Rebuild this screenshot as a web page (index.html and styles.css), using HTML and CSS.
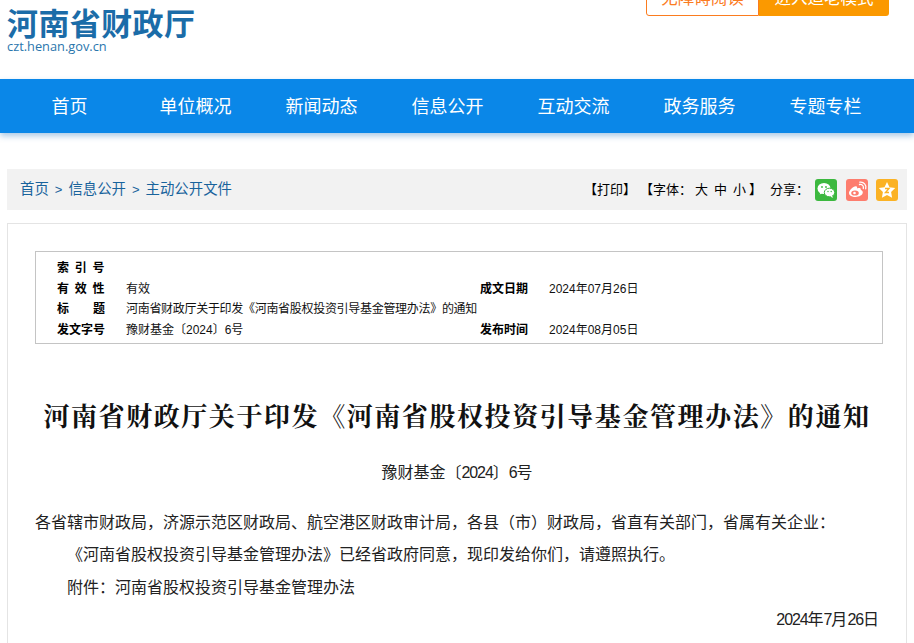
FILE: index.html
```html
<!DOCTYPE html>
<html lang="zh-CN">
<head>
  <meta charset="UTF-8">
  <title>河南省财政厅关于印发《河南省股权投资引导基金管理办法》的通知</title>
  <link rel="stylesheet" href="styles.css">
</head>
<body>

<header class="top">
  <div class="logo">
    <div class="logo-name">河南省财政厅</div>
    <div class="logo-url">czt.henan.gov.cn</div>
  </div>
  <div class="modes">
    <a class="mode-plain">无障碍阅读</a>
    <a class="mode-old">进入适老模式</a>
  </div>
</header>

<nav class="nav">
  <a>首页</a>
  <a>单位概况</a>
  <a>新闻动态</a>
  <a>信息公开</a>
  <a>互动交流</a>
  <a>政务服务</a>
  <a>专题专栏</a>
</nav>

<div class="crumb-bar">
  <div class="crumbs">
    <a>首页</a><span class="sep">&gt;</span><a>信息公开</a><span class="sep">&gt;</span><a>主动公开文件</a>
  </div>
  <div class="tools">
    <span class="print">【打印】</span>
    <span class="size">【字体：<b>大</b><b>中</b><b>小</b>】</span>
    <span class="share">分享：</span>
    <span class="icon icon-wechat">
      <svg viewBox="0 0 22 22" width="22" height="22">
        <ellipse cx="9" cy="9.500" rx="6.500" ry="5.500" fill="#fff"/>
        <path d="M5.500 13l-.8 2.600 3-1.500z" fill="#fff"/>
        <ellipse cx="14.500" cy="13.500" rx="5.200" ry="4.300" fill="#fff" stroke="#3cb83f" stroke-width="1"/>
        <path d="M17 16.800l1.200 1.900-3-1z" fill="#fff"/>
        <circle cx="7" cy="8" r=".9" fill="#3cb83f"/>
        <circle cx="11" cy="8" r=".9" fill="#3cb83f"/>
        <circle cx="13" cy="12.500" r=".7" fill="#3cb83f"/>
        <circle cx="16.200" cy="12.500" r=".7" fill="#3cb83f"/>
      </svg>
    </span>
    <span class="icon icon-weibo">
      <svg viewBox="0 0 22 22" width="22" height="22">
        <path d="M9.500 18c-3.600 0-6.500-1.600-6.500-4 0-2.600 4-6.500 6.800-6.800 1.400-.1 1.500 1.200 1.200 2.300 2-.8 4.200-.6 3.800 1.500 1.200.4 2 1.200 2 2.300 0 2.700-3.500 4.700-7.300 4.700z" fill="#fff"/>
        <ellipse cx="9" cy="14" rx="3.800" ry="2.600" fill="#fd7d6e"/>
        <circle cx="8.500" cy="14" r="1.300" fill="#fff"/>
        <path d="M13.500 5.500c2.500-.5 4.500 1.500 3.800 4M13.800 3.200c4-.6 7 2.800 5.900 6.600" fill="none" stroke="#fff" stroke-width="1.300" stroke-linecap="round"/>
      </svg>
    </span>
    <span class="icon icon-fav">
      <svg viewBox="0 0 22 22" width="22" height="22">
        <path d="M11 3l2.500 5.200 5.700.8-4.100 4 1 5.700-5.100-2.700-5.100 2.700 1-5.700-4.100-4 5.700-.8z" fill="#fff"/>
        <path d="M9 9.500h4l-3.500 4h3.500" fill="none" stroke="#fbb224" stroke-width="1.400"/>
      </svg>
    </span>
  </div>
</div>

<main class="article">
  <table class="meta">
    <tr>
      <th class="spaced">索 引 号</th><td></td><th></th><td></td>
    </tr>
    <tr>
      <th class="spaced">有 效 性</th><td>有效</td><th>成文日期</th><td>2024年07月26日</td>
    </tr>
    <tr>
      <th>标　　题</th><td class="tight">河南省财政厅关于印发《河南省股权投资引导基金管理办法》的通知</td><th></th><td></td>
    </tr>
    <tr>
      <th>发文字号</th><td>豫财基金〔2024〕6号</td><th>发布时间</th><td>2024年08月05日</td>
    </tr>
  </table>

  <h1>河南省财政厅关于印发《河南省股权投资引导基金管理办法》的通知</h1>
  <p class="doc-no">豫财基金〔<span class="num">2024</span>〕<span class="num">6</span>号</p>
  <p class="to">各省辖市财政局，济源示范区财政局、航空港区财政审计局，各县（市）财政局，省直有关部门，省属有关企业：</p>
  <p class="para">《河南省股权投资引导基金管理办法》已经省政府同意，现印发给你们，请遵照执行。</p>
  <p class="para attach">附件：河南省股权投资引导基金管理办法</p>
  <p class="date"><span class="num">2024</span>年<span class="num">7</span>月<span class="num">26</span>日</p>
</main>

</body>
</html>
```

FILE: styles.css
```css
html, body { margin: 0; padding: 0; height: 643px; overflow: hidden; }
body { font-family: "Liberation Sans", "Noto Sans CJK SC", sans-serif; color: #222; background: #fff; }
a { color: inherit; text-decoration: none; }

.top { height: 79px; padding: 0 25px 0 7px; display: flex; justify-content: space-between; align-items: flex-start; box-sizing: border-box; }
.logo-name { font-family: "Noto Sans CJK SC", sans-serif; font-size: 31px; font-weight: 700; line-height: 33px; color: #1b6ca8; margin-top: 5px; letter-spacing: .4px; }
.logo-url { font-family: "Open Sans", sans-serif; font-size: 12.8px; line-height: 14px; color: #2a76ad; margin-top: 1px; }
.modes { display: flex; height: 36px; margin-top: -20px; font-size: 16.5px; line-height: 36px; }
.mode-plain { width: 113px; text-align: center; color: #fb7c1f; background: #fff; border: 1px solid #fb7c1f; border-radius: 3px 0 0 3px; box-sizing: border-box; line-height: 34px; }
.mode-old { width: 130px; text-align: center; color: #fff; background: #fb9900; border-radius: 0 3px 3px 0; }

.nav { height: 54px; padding: 2px 6.5px 0; box-sizing: border-box; background: #0a87e8; display: flex; box-shadow: 0 3px 6px rgba(10, 100, 180, .35); }
.nav a { width: 126px; text-align: center; color: #fff; font-size: 18px; line-height: 53px; }

.crumb-bar { margin: 36px 7px 0; height: 41px; background: #f2f2f2; display: flex; justify-content: space-between; align-items: center; padding: 0 9px 0 13px; font-size: 13px; }
.crumbs { color: #18639c; font-size: 14.4px; margin-bottom: 4px; }
.crumbs .sep { margin: 0 6px; font-size: 13px; }
.tools { display: flex; align-items: center; color: #000; }
.print, .size, .share { margin-bottom: 2px; }
.print { margin-right: 4px; }
.size { margin-right: 8px; }
.size b { font-weight: 400; margin: 0 3px; }
.share { margin-right: 6px; }
.icon { width: 22px; height: 22px; border-radius: 3px; margin-left: 8.5px; display: block; }
.share + .icon { margin-left: 0; }
.icon svg { display: block; }
.icon-wechat { background: #3cb83f; }
.icon-weibo { background: #fd7d6e; }
.icon-fav { background: #fbb224; }

.article { margin: 13px 7px 0; border: 1px solid #e4e4e4; border-bottom: 0; padding: 27px 27px 0; height: 420px; }
.meta { width: 848px; border: 1px solid #c4c4c4; border-collapse: separate; border-spacing: 0; padding: 4.5px 0; font-size: 12px; table-layout: fixed; }
.meta th { font-weight: 700; color: #000; text-align: left; height: 20.5px; padding: 0; font-size: 12px; }
.meta td { padding: 0; color: #111; white-space: nowrap; }
.meta th:first-child { width: 69px; padding-left: 21px; }
.meta th:nth-child(3) { width: 69px; }
.meta td:nth-child(2) { width: 354px; }
.meta .tight { letter-spacing: -.3px; }
.spaced { letter-spacing: 1.2px; }

h1 { margin: 53px 0 0; text-align: center; font-family: "Noto Serif CJK SC", "Noto Sans CJK SC", serif; font-size: 26px; line-height: 36px; letter-spacing: 1.57px; color: #111; white-space: nowrap; }
.doc-no { margin: 28px 0 0; text-align: center; font-size: 16px; line-height: 24px; }
.to, .para, .date { margin: 0; font-size: 16px; line-height: 24px; }
.to { margin-top: 26px; }
.para { margin-top: 8px; text-indent: 32px; }
.attach { margin-top: 9px; }
.date { margin-top: 8px; text-align: right; }
.num { letter-spacing: -1.1px; }
```
